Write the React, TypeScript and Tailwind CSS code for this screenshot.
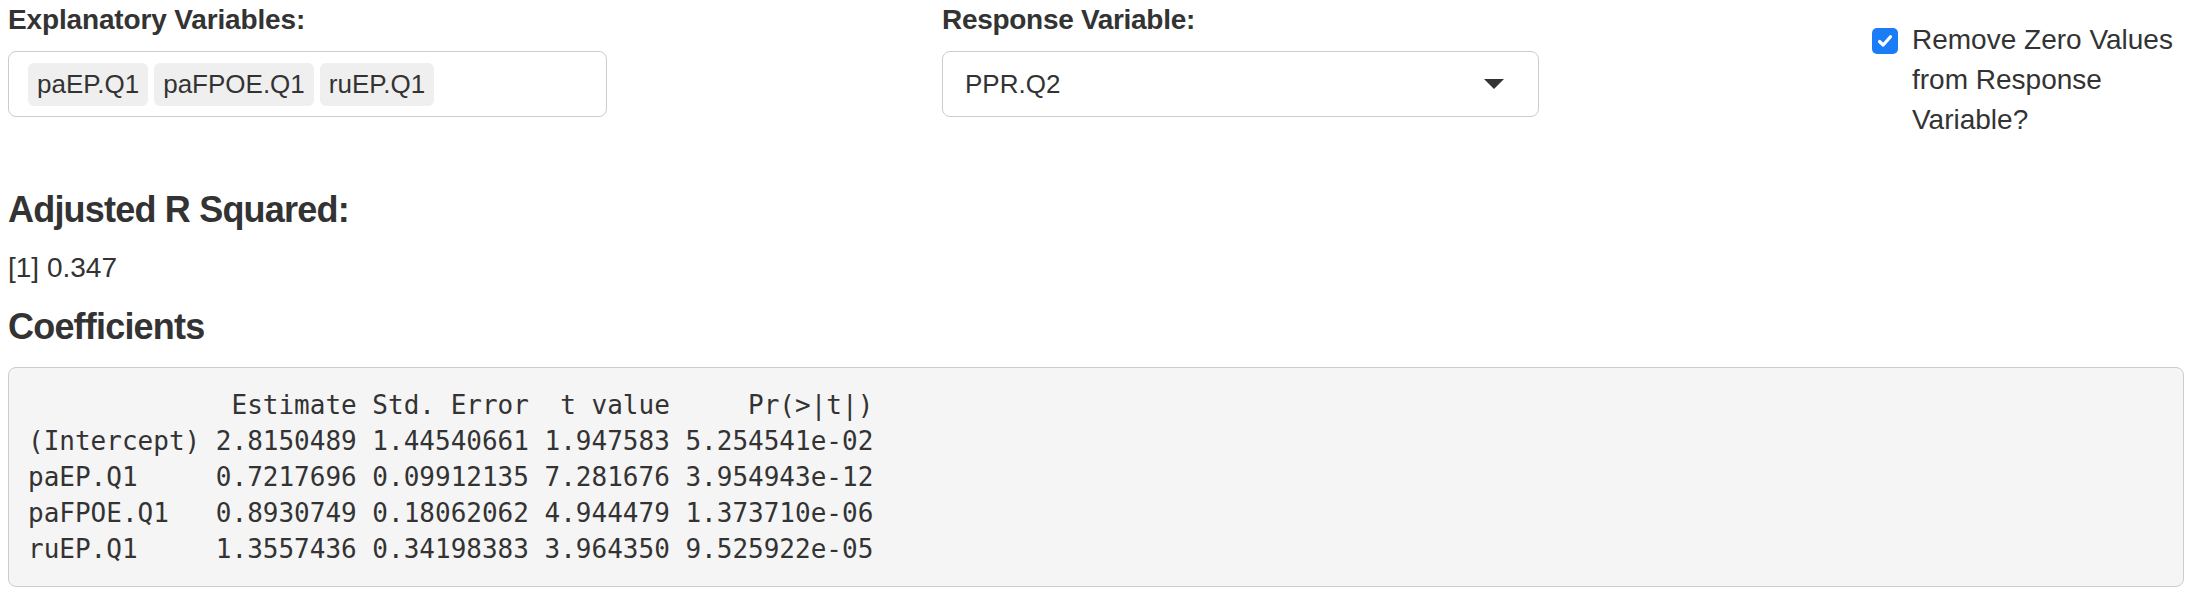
import React from "react";

const coef = `             Estimate Std. Error  t value     Pr(>|t|)
(Intercept) 2.8150489 1.44540661 1.947583 5.254541e-02
paEP.Q1     0.7217696 0.09912135 7.281676 3.954943e-12
paFPOE.Q1   0.8930749 0.18062062 4.944479 1.373710e-06
ruEP.Q1     1.3557436 0.34198383 3.964350 9.525922e-05`;

function Pill({ children }: { children: React.ReactNode }) {
  return (
    <div className="h-[43px] flex items-center px-[9px] rounded-[6px] bg-[#efefef] text-[26px] text-[#333]">
      {children}
    </div>
  );
}

export default function App() {
  return (
    <div className="w-[2196px] h-[600px] bg-white pl-[8px] pr-[12px] text-[#333] font-['Liberation_Sans',Arial,sans-serif] text-[28px] leading-[40px]">
      <div className="flex items-start">
        <div className="w-[934px] shrink-0">
          <div className="font-bold tracking-[-0.15px]">Explanatory Variables:</div>
          <div className="mt-[11px] w-[599px] h-[66px] border border-[#cccccc] rounded-[8px] flex items-center pl-[19px] gap-[6px]">
            <Pill>paEP.Q1</Pill>
            <Pill>paFPOE.Q1</Pill>
            <Pill>ruEP.Q1</Pill>
          </div>
        </div>
        <div className="w-[930px] shrink-0">
          <div className="font-bold tracking-[-0.3px]">Response Variable:</div>
          <div className="mt-[11px] w-[597px] h-[66px] border border-[#cccccc] rounded-[8px] flex items-center justify-between pl-[22px] pr-[34px]">
            <span className="text-[26px]">PPR.Q2</span>
            <svg width="20" height="10" viewBox="0 0 20 10">
              <polygon points="0,0 20,0 10,10" fill="#333333" />
            </svg>
          </div>
        </div>
        <div className="flex-1 pt-[20px] flex items-start gap-[14px]">
          <div className="mt-[8px] w-[26px] h-[26px] shrink-0 rounded-[5px] bg-[#1a7cf6] flex items-center justify-center">
            <svg width="18" height="18" viewBox="0 0 18 18">
              <path d="M3.5 9.5 L7.2 13 L14.5 4.8" fill="none" stroke="#ffffff" strokeWidth="3.2" strokeLinecap="round" strokeLinejoin="round" />
            </svg>
          </div>
          <div>Remove Zero Values from Response Variable?</div>
        </div>
      </div>

      <div className="mt-[50px] font-bold text-[36px] leading-[40px] tracking-[-0.8px]">Adjusted R Squared:</div>
      <div className="mt-[18px]">[1] 0.347</div>
      <div className="mt-[19px] font-bold text-[36px] leading-[40px] tracking-[-0.8px]">Coefficients</div>
      <pre className="mt-[20px] border border-[#cccccc] rounded-[8px] bg-[#f5f5f5] px-[19px] py-[19px] font-['DejaVu_Sans_Mono',monospace] text-[26px] leading-[36px] text-[#333] whitespace-pre">
        {coef}
      </pre>
    </div>
  );
}
